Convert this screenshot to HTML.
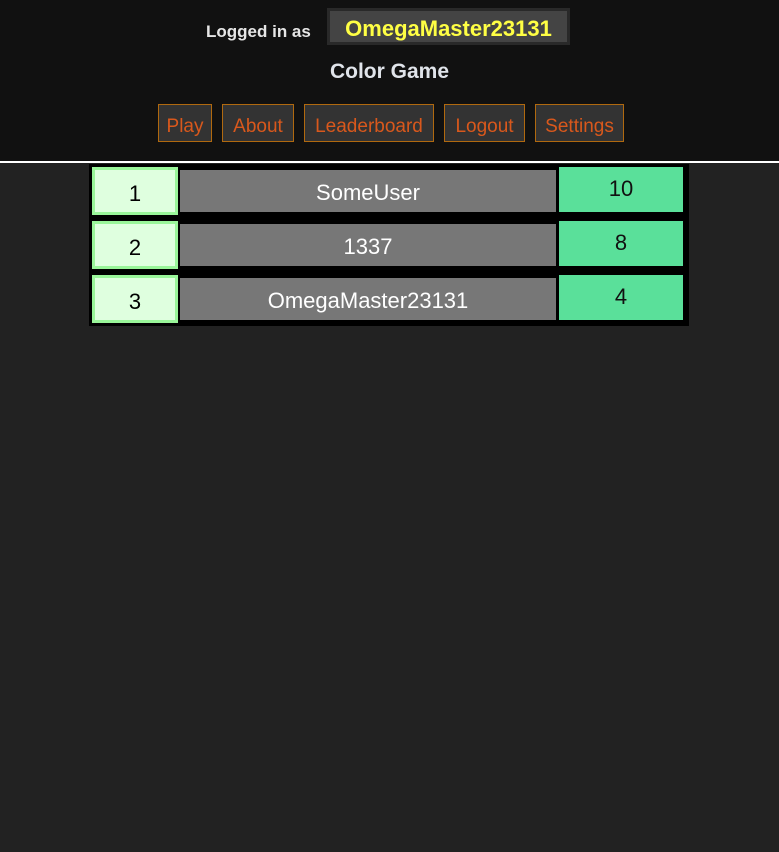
<!DOCTYPE html>
<html><head><style>
body{margin:0;width:779px;height:852px;background:#222;font-family:"Liberation Sans",sans-serif;position:relative;overflow:hidden}
.hdr{position:absolute;left:0;top:0;width:779px;height:161px;background:#111;border-bottom:2px solid #fff}
.a{position:absolute}
.btn{position:absolute;top:104px;height:36px;background:#333;border:1px solid #b0690f;color:#d9581c;font-size:19px;line-height:43px;text-align:center;box-sizing:content-box}
.c{position:absolute;text-align:center;font-size:22px;box-sizing:border-box}
.r{background:#dfffdf;border:3px solid #99f599;color:#000;left:92px;width:86px;height:48px;line-height:48px}
.n{background:#777;color:#fff;left:180px;width:376px;height:42px;line-height:46px}
.s{background:#5ae09a;color:#111;left:559px;width:124px;height:45px;line-height:44px}
</style></head><body>
<div class="hdr"></div>
<div class="a" style="left:206px;top:22px;color:#e6e6e6;font-weight:bold;font-size:17px">Logged in as</div>
<div class="a" style="left:327px;top:8px;width:243px;height:37px;background:#444;border:3px solid #292929;box-sizing:border-box;color:#ffff44;font-weight:bold;font-size:22px;line-height:35px;text-align:center">OmegaMaster23131</div>
<div class="a" style="left:0;width:779px;top:60px;text-align:center;color:#e0e4ea;font-weight:bold;font-size:21px">Color Game</div>
<div class="btn" style="left:158px;width:52px">Play</div>
<div class="btn" style="left:222px;width:70px">About</div>
<div class="btn" style="left:304px;width:128px">Leaderboard</div>
<div class="btn" style="left:444px;width:79px">Logout</div>
<div class="btn" style="left:535px;width:87px">Settings</div>
<div class="a" style="left:89px;top:164px;width:600px;height:162px;background:#000"></div>
<div class="c r" style="top:167px">1</div>
<div class="c n" style="top:170px">SomeUser</div>
<div class="c s" style="top:167px">10</div>
<div class="c r" style="top:221px">2</div>
<div class="c n" style="top:224px">1337</div>
<div class="c s" style="top:221px">8</div>
<div class="c r" style="top:275px">3</div>
<div class="c n" style="top:278px">OmegaMaster23131</div>
<div class="c s" style="top:275px">4</div>
</body></html>
